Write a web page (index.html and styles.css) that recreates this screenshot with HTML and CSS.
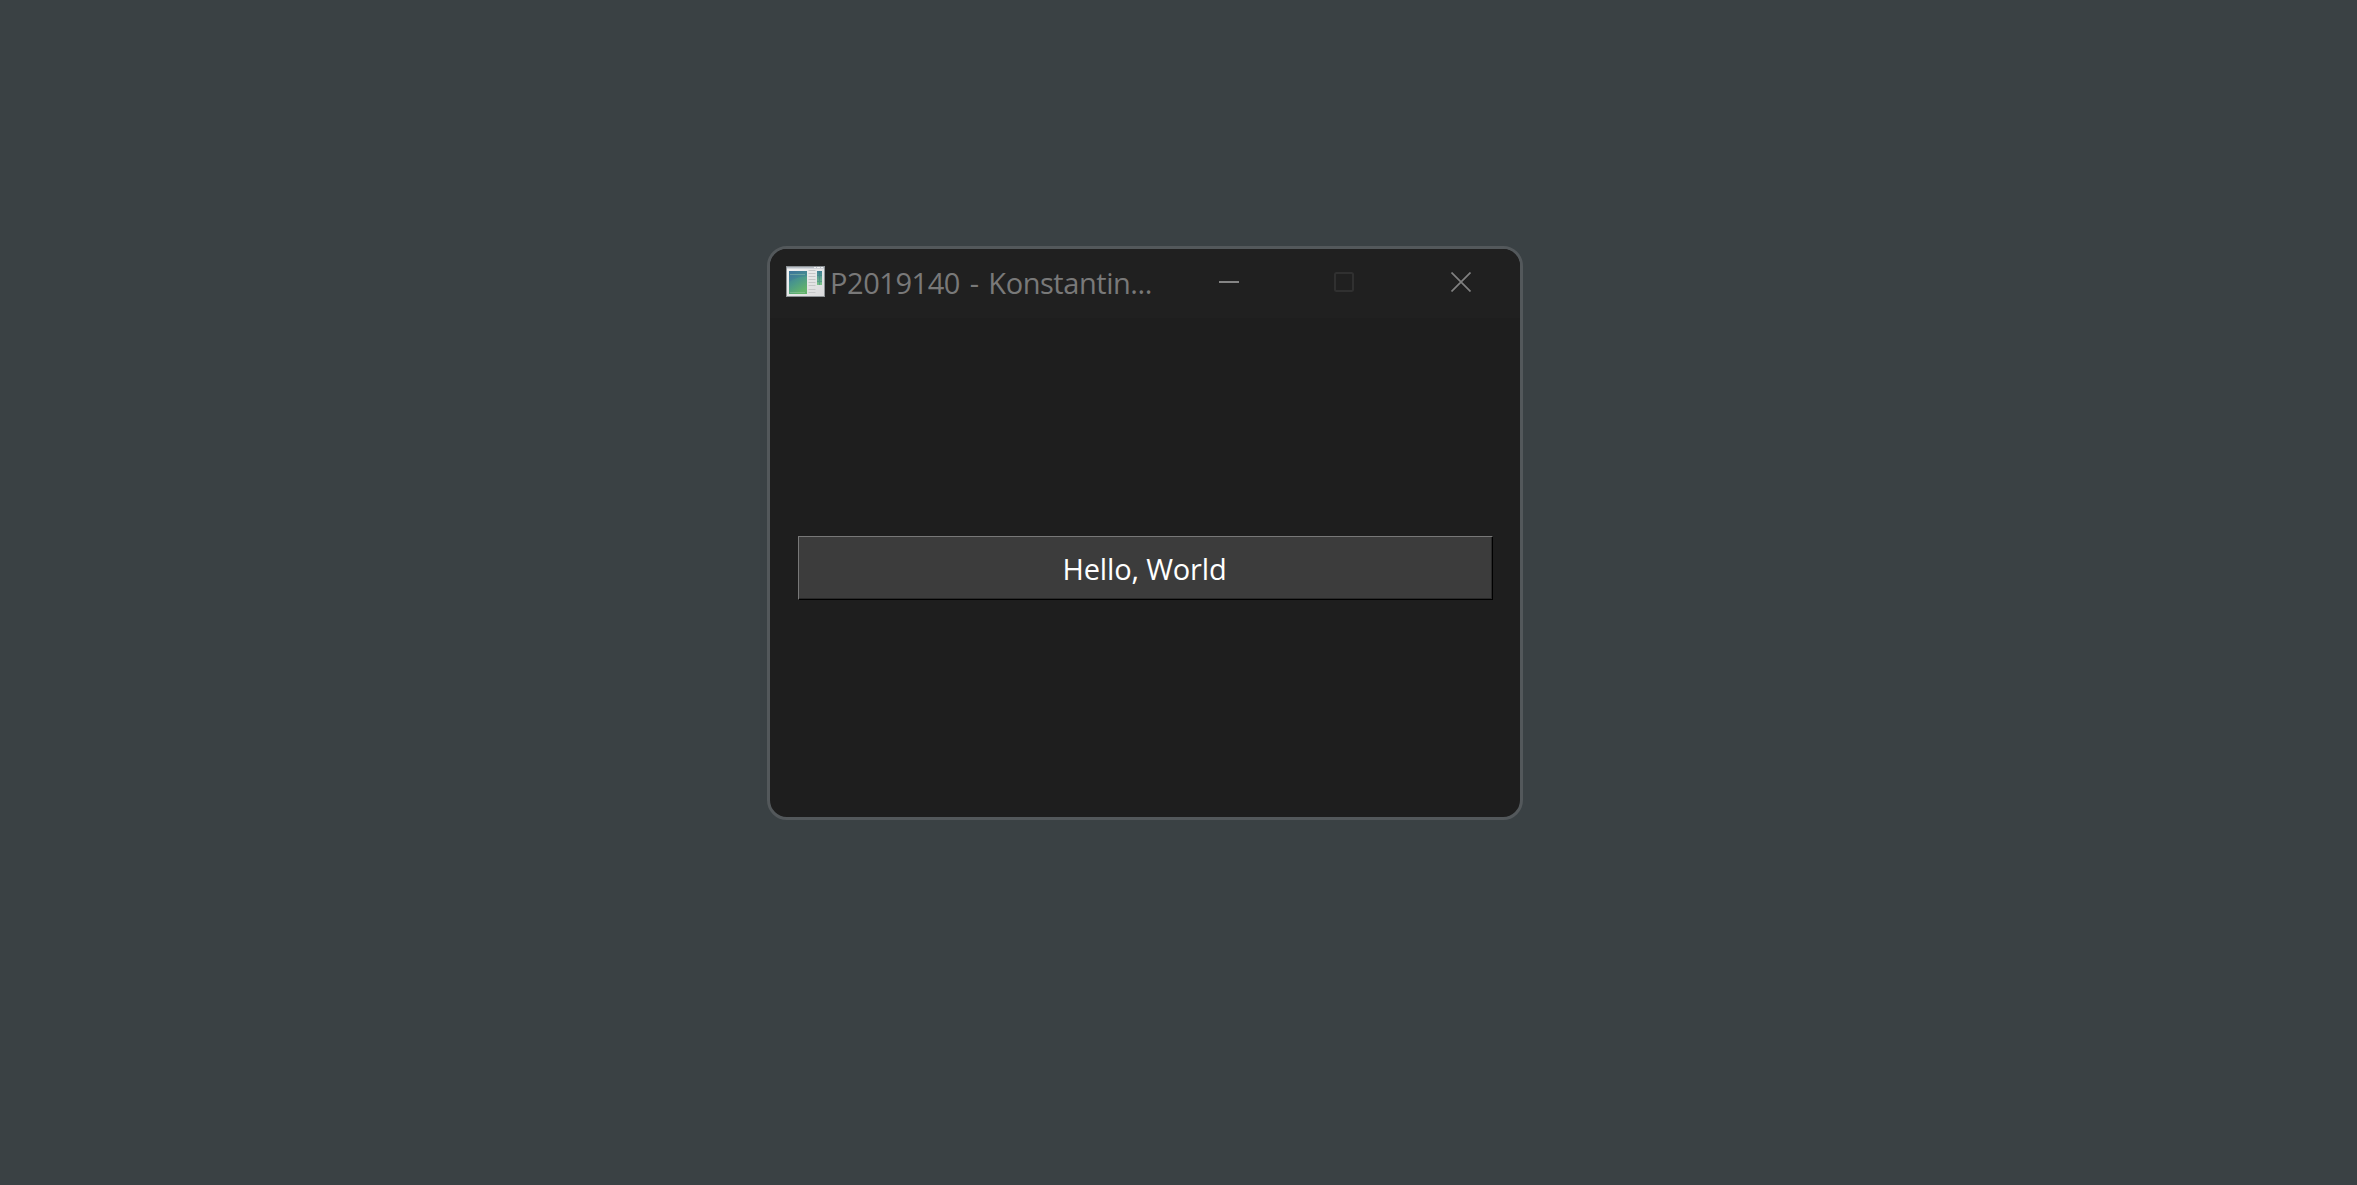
FILE: index.html
```html
<!DOCTYPE html>
<html lang="en">
<head>
<meta charset="utf-8">
<title>P2019140</title>
<link rel="stylesheet" href="styles.css">
</head>
<body>
<main class="window">
  <header class="titlebar">
    <svg class="app-icon" viewBox="0 0 39 31">
      <defs>
        <linearGradient id="pane" x1="0" y1="0" x2=".5" y2="1">
          <stop offset="0" stop-color="#3f729b"/><stop offset=".5" stop-color="#48968c"/><stop offset="1" stop-color="#62b36b"/>
        </linearGradient>
        <linearGradient id="strip" x1="0" y1="0" x2="0" y2="1">
          <stop offset="0" stop-color="#3f8095"/><stop offset="1" stop-color="#7cc488"/>
        </linearGradient>
        <linearGradient id="sheet" x1="0" y1="0" x2="1" y2="1">
          <stop offset="0" stop-color="#f4f4f4"/><stop offset="1" stop-color="#d9dadb"/>
        </linearGradient>
      </defs>
      <path d="M0 0h39v31H0z" fill="#8d9295"/>
      <path d="M1 1h37v29H1z" fill="url(#sheet)"/>
      <path d="M1 1h37v1.500H1z" fill="#b9bfc7"/>
      <path d="M28 1h2v1h-2zM31 1h3v1h-3zM35 1h2v1h-2z" fill="#eef0f3"/>
      <path d="M3 5h18v23H3z" fill="url(#pane)"/>
      <path d="M3 16Q9 11 21 10V5H3z" fill="#3c779c" opacity=".4"/>
      <path d="M4 8.500h15M4 26.500h15" stroke="#a4d0b0" opacity=".4"/>
      <path d="M22.500 4.500h7M22.500 7.500h7M22.500 10.500h7M22.500 13.500h7M22.500 16.500h7M22.500 19.500h7M22.500 23.500h7M22.500 26.500h7" stroke="#c6c7c8"/>
      <path d="M31 5h5v14h-5z" fill="url(#strip)"/>
      <path d="M31 9.500h5M31 15.500h5M33.500 5v14" stroke="#326f83" opacity=".35"/>
    </svg>
    <span class="title">P2019140 - Konstantin...</span>
    <svg class="control minimize" viewBox="0 0 20 20"><path d="M0 9h20v2H0z"/></svg>
    <svg class="control maximize" viewBox="0 0 20 20"><rect x="1" y="1" width="18" height="18" rx="1.500"/></svg>
    <svg class="control close" viewBox="0 0 20 20"><path d="M.5.5l19 19M19.500.5l-19 19"/></svg>
  </header>
  <section class="content">
    <button class="hello"><span class="label">Hello, World</span></button>
  </section>
</main>
</body>
</html>
```
FILE: styles.css
```css
* {
  box-sizing: border-box;
}

body {
  margin: 0;
  height: 1185px;
  padding: 246px 0 0 767px;
  background: #3a4144;
  font-family: "Open Sans", "Noto Sans", sans-serif;
  overflow: hidden;
}

.window {
  display: flex;
  flex-direction: column;
  width: 756px;
  height: 574px;
  border: 3px solid #53585b;
  border-radius: 20px;
  background: #1e1e1e;
  overflow: hidden;
}

.titlebar {
  display: flex;
  flex: none;
  align-items: center;
  height: 69px;
  padding: 0 49px 3px 16px;
  background: #202020;
}

.app-icon {
  width: 39px;
  height: 31px;
  flex: none;
  margin-bottom: 1px;
}

.title {
  width: 394px;
  padding: 2px 0 0 5px;
  color: #797979;
  font-size: 29px;
  letter-spacing: -0.45px;
  word-spacing: 2.7px;
  line-height: 40px;
  white-space: nowrap;
}

.control {
  width: 20px;
  height: 20px;
  flex: none;
}

.minimize {
  margin-right: 95px;
  fill: #858585;
}

.maximize {
  margin-right: 97px;
  fill: none;
  stroke: #303030;
  stroke-width: 2;
}

.close {
  fill: none;
  stroke: #808080;
  stroke-width: 1.7;
}

.content {
  flex: 1;
  padding: 218px 27px 0 28px;
}

.hello {
  display: flex;
  align-items: center;
  justify-content: center;
  width: 695px;
  height: 64px;
  padding: 2px 2px 0 0;
  border: 1px solid;
  border-color: #787878 #000 #000 #787878;
  background: #3c3c3c;
  box-shadow: inset -1px -1px #292929;
  color: #fff;
  font: 29px/40px "Open Sans", "Noto Sans", sans-serif;
}

.label {
  letter-spacing: -0.15px;
}
```
